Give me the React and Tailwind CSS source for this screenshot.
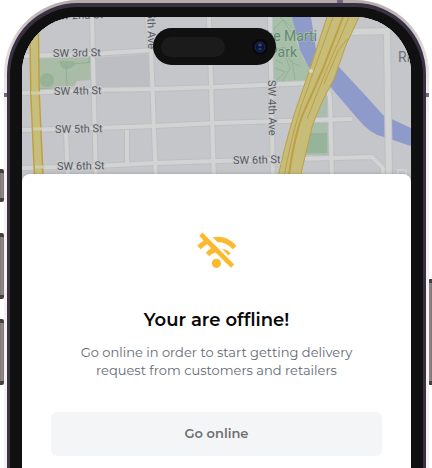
function StreetMap() {
  return (
    <svg
      className="block h-[165px] w-full bg-[#c4c5c8]"
      viewBox="22 17 389 165"
      preserveAspectRatio="xMidYMin slice"
      role="img"
      aria-label="Street map"
      fontFamily="Roboto, sans-serif"
    >
      <rect x="22" y="17" width="389" height="165" fill="#c5c6c9" />
      <path d="M95 58L149 54L151 86L96 88Z" fill="#bdbec4" />
      <path d="M38 57L91 56L92 80L77 81L74 86L52 90L39 90Z" fill="#a9bca8" />
      <circle cx="47" cy="80" r="7" fill="#97b397" />
      <path d="M59 61H74V66Q67 72 61 67Z" fill="#97b397" />
      <path d="M66 65L67 85M73 64L91 62M89 56V63M39 89H52" stroke="#8eae8f" fill="none" />
      <path d="M272 17H293L297 43L304 60L312 70L309 82L273 82Z" fill="#a7bfa9" />
      <path
        d="M273 30L283 20L291 32M280 17L292 27M274 50L285 47L291 62L300 66M275 68L285 72L277 80M282 82L290 68L286 58M295 80L292 60M276 60L283 64"
        stroke="#91b295"
        fill="none"
      />
      <path d="M326 88L330 97L330 155L305 155L308 122Z" fill="#aabdac" />
      <path d="M308 133H327V153H304Z" fill="#96b49a" />
      <path
        d="M292 17H311L316 50L338 66L365 95L383 115L411 128V146L384 137Q371 135 357 118L328 84L308 66L300 50Z"
        fill="#8d9aca"
      />

      <g fill="none" strokeLinejoin="round">
        <g stroke="#bdbfc1" strokeWidth="6">
          <path d="M22 56L92 54L153 50M22 93L91 90L153 89L216 87L309 83M22 130L97 128L155 126L216 123L352 119M22 168L97 166L155 163L216 161L372 157L383 168V182" />
          <path d="M92 17L96 182M147 17L151 50L156 182M209 17L214 182M66 131L68 182M127 130V163M270 17L273 182M324 80L330 97L332 182" />
        </g>
        <g stroke="#d2d4d4" strokeWidth="4">
          <path d="M22 56L92 54L153 50M22 93L91 90L153 89L216 87L309 83M22 130L97 128L155 126L216 123L352 119M22 168L97 166L155 163L216 161L372 157L383 168V182" />
          <path d="M92 17L96 182M147 17L151 50L156 182M209 17L214 182M66 131L68 182M127 130V163M270 17L273 182M324 80L330 97L332 182" />
        </g>
        <path d="M387 31L389 182M348 32L390 31" stroke="#bdbfc1" strokeWidth="8" />
        <path d="M387 31L389 182M348 32L390 31" stroke="#d2d4d4" strokeWidth="6" />
        <path d="M398 182V170H406V182" stroke="#d0d2d2" strokeWidth="2" />

        <path d="M34 17L35 93L39 182" stroke="#bda044" strokeWidth="10" />
        <path d="M34 17L35 93L39 182" stroke="#c8be7b" strokeWidth="7" />
        <path d="M31 93H40M33 129H42M35 167H43" stroke="#cdccae" strokeWidth="3" />
      </g>

      <path
        d="M327 17H359L352 32L346 45L334 79Q319 106 312 127L301 174L299 182H276L279 174Q285 143 295 112Z"
        fill="#c7bd79"
      />
      <g stroke="#bd9f45" fill="none">
        <path d="M327 17L311 66L295 112Q285 143 277 182" />
        <path d="M359 17L346 45L334 79Q319 106 312 127L299 182" />
        <path d="M333 17L314 70L300 110Q291 138 283 182" />
        <path d="M343 17L322 71L302 116Q293 142 288 182" strokeWidth="2" />
        <path d="M349 17L328 66L307 119" />
        <path d="M348 38L338 51L324 84" />
      </g>
      <circle cx="311" cy="71" r="2" fill="#d6d6ca" />

      <g fill="#56595d" stroke="#c9cacd" strokeWidth="2" paintOrder="stroke" fontSize="11">
        <text x="53" y="20" transform="rotate(-2 53 20)">SW 2nd St</text>
        <text x="53" y="57" transform="rotate(-1 53 57)">SW 3rd St</text>
        <text x="54" y="95" transform="rotate(-1 54 95)">SW 4th St</text>
        <text x="55" y="133" transform="rotate(-1 55 133)">SW 5th St</text>
        <text x="57" y="170" transform="rotate(-1 57 170)">SW 6th St</text>
        <text x="233" y="164" transform="rotate(-1 233 164)">SW 6th St</text>
        <text x="148" y="49" textAnchor="end" transform="rotate(89 148 49)">SW 5th Ave</text>
        <text x="268" y="80" transform="rotate(89 268 80)">SW 4th Ave</text>
      </g>
      <g fill="#5f8a6b" stroke="#b5c4b8" strokeWidth="1" paintOrder="stroke" fontSize="14">
        <text x="317" y="41" textAnchor="end">The Marti</text>
        <text x="297" y="57" textAnchor="end">Park</text>
      </g>
      <text x="398" y="62" fill="#6c747b" fontSize="14">Ri</text>
    </svg>
  );
}

function OfflineIcon() {
  return (
    <svg className="h-9 w-10" viewBox="197 232 40 36" fill="#fdb92e" aria-hidden="true">
      <path d="M199.3 235.8L202.5 232.6L234.2 264.6L231 267.8L215.6 252.4Q211.8 253 209.3 256.2L205.8 252.7Q208 250 211.2 248.2L207.3 244.3Q203.4 246.2 200.8 249.3L197.2 245.8Q200 242.8 203.7 240.7Z" />
      <path d="M212.6 237.2Q227 234.8 236.3 245.8L232.8 249.3Q227 242.2 217.4 241.9Z" />
      <path d="M221.8 248.6Q227 249.3 230.6 252.9L228.4 255.4Z" />
      <circle cx="216.4" cy="263.3" r="4.6" />
    </svg>
  );
}

function DynamicIsland() {
  return (
    <div className="absolute inset-x-0 top-[11px] flex justify-center pr-1">
      <div className="flex h-[37px] w-[123px] items-center justify-between rounded-full bg-[#101010] px-2">
        <div className="h-5 w-16 rounded-full bg-[#1b1b1b]" />
        <svg className="size-4" viewBox="0 0 16 16" aria-hidden="true">
          <circle cx="8" cy="8" r="8" fill="#08080d" />
          <circle cx="8" cy="8" r="5" fill="#0b1435" stroke="#202857" />
          <ellipse cx="8" cy="6" rx="2" ry="1.5" fill="#3c4180" />
          <ellipse cx="8" cy="10" rx="2" ry="1.2" fill="#104365" />
        </svg>
      </div>
    </div>
  );
}

function SideKey({ className }) {
  return (
    <span
      className={`absolute w-1 border-y-4 border-[#45413f] bg-linear-to-r from-[#777270] via-[#938b8a] to-[#777270] ${className}`}
    />
  );
}

export default function App() {
  return (
    <div className="relative h-screen overflow-hidden bg-white font-['Montserrat','Inter',sans-serif]">
      <SideKey className="top-[169px] left-0 h-[33px] rounded-r-xs" />
      <SideKey className="top-[233px] left-0 h-[66px] rounded-r-xs" />
      <SideKey className="top-[319px] left-0 h-[66px] rounded-r-xs" />
      <SideKey className="top-[279px] right-0 h-[106px] rounded-l-xs" />

      <div className="relative mr-[3px] ml-1 flex min-h-full flex-col rounded-t-[74px] bg-linear-to-b from-[#b5a9aa] from-0% via-[#dfd7d7] via-10% to-[#f6f0f1] to-25% px-[3px] pt-[3px]">
        <span className="absolute top-0 right-[86px] h-1 w-1.5 bg-[#706780]" />
        <span className="absolute top-[93px] left-0 h-1 w-1 bg-[#706780]" />
        <span className="absolute top-[93px] right-0 h-1 w-1 bg-[#706780]" />
        <div className="relative flex grow flex-col rounded-t-[71px] bg-[#383142] px-[3px] pt-1">
          <div className="flex grow flex-col rounded-t-[68px] bg-[#101010] px-3 pt-2.5">
            <main className="relative flex grow flex-col overflow-hidden rounded-t-[56px] bg-white">
              <StreetMap />
              <DynamicIsland />
              <section className="relative -mt-2 flex grow flex-col items-center rounded-t-lg bg-white px-[29px] pt-[58px] text-center shadow-[0_-1px_3px_rgba(0,0,0,0.12)]">
                <OfflineIcon />
                <h1 className="mt-[38px] text-lg leading-7 font-semibold text-[#080808]">
                  Your are offline!
                </h1>
                <p className="mt-[9px] max-w-[290px] text-[13px] leading-[18px] text-[#636a75]">
                  Go online in order to start getting delivery request from customers and retailers
                </p>
                <button
                  type="button"
                  className="mt-[33px] h-11 w-full rounded-md bg-[#f4f5f7] text-[13px] font-semibold text-[#707070]"
                >
                  Go online
                </button>
              </section>
            </main>
          </div>
        </div>
      </div>
    </div>
  );
}
